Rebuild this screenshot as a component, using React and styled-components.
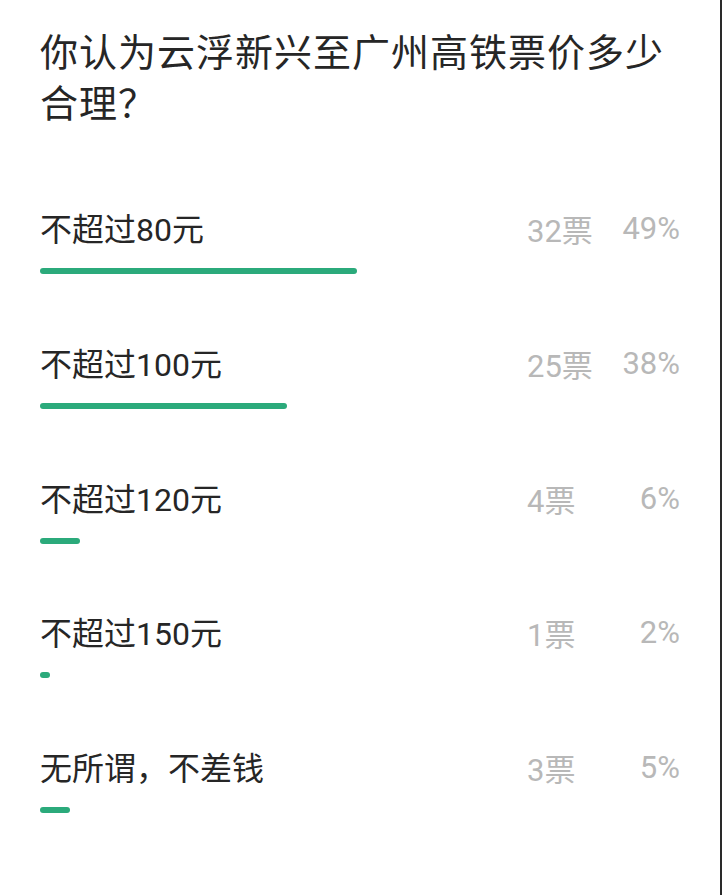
import React from "react";
import styled, { createGlobalStyle } from "styled-components";

const GlobalStyle = createGlobalStyle`
  html, body {
    margin: 0;
    padding: 0;
    background: #fff;
  }
  body {
    font-family: Roboto, "Noto Sans CJK SC", "Noto Sans", sans-serif;
    -webkit-font-smoothing: antialiased;
  }
`;

const Page = styled.div`
  box-sizing: border-box;
  width: 722px;
  min-height: 895px;
  padding: 28px 0 0 40px;
  border-right: 2px solid #2a2a2a;
  background: #fff;
`;

const Title = styled.h1`
  margin: 0;
  width: 640px;
  font-size: 38px;
  font-weight: 400;
  line-height: 51px;
  letter-spacing: 1px;
  color: #262626;
`;

const OptionList = styled.div`
  display: flex;
  flex-direction: column;
  gap: 67.75px;
  margin-top: 77px;
`;

const Option = styled.div`
  display: flex;
  flex-direction: column;
`;

const OptionHead = styled.div`
  display: flex;
  align-items: center;
  height: 40px;
`;

const Label = styled.span`
  flex: 1;
  font-size: 32px;
  color: #262626;
`;

const Stat = styled.span`
  padding-top: 3px;
  font-size: 31px;
  font-weight: 400;
  color: #b8b8b8;
`;

const Votes = styled(Stat)`
  width: 74px;
  text-align: left;
`;

const Percent = styled(Stat)`
  width: 79px;
  margin-right: 40px;
  text-align: right;
`;

const Track = styled.div`
  width: 643px;
  height: 6px;
  margin-top: 21px;
`;

const Fill = styled.div`
  height: 100%;
  border-radius: 3px;
  background: #2baa7b;
`;

const options = [
  { label: "不超过80元", votes: 32 },
  { label: "不超过100元", votes: 25 },
  { label: "不超过120元", votes: 4 },
  { label: "不超过150元", votes: 1 },
  { label: "无所谓，不差钱", votes: 3 },
];

const total = options.reduce((sum, o) => sum + o.votes, 0);

export default function App() {
  return (
    <>
      <GlobalStyle />
      <Page>
        <Title>你认为云浮新兴至广州高铁票价多少合理？</Title>
        <OptionList>
          {options.map((o) => {
            const ratio = o.votes / total;
            return (
              <Option key={o.label}>
                <OptionHead>
                  <Label>{o.label}</Label>
                  <Votes>{o.votes}票</Votes>
                  <Percent>{Math.round(ratio * 100)}%</Percent>
                </OptionHead>
                <Track>
                  <Fill style={{ width: `${ratio * 100}%` }} />
                </Track>
              </Option>
            );
          })}
        </OptionList>
      </Page>
    </>
  );
}
